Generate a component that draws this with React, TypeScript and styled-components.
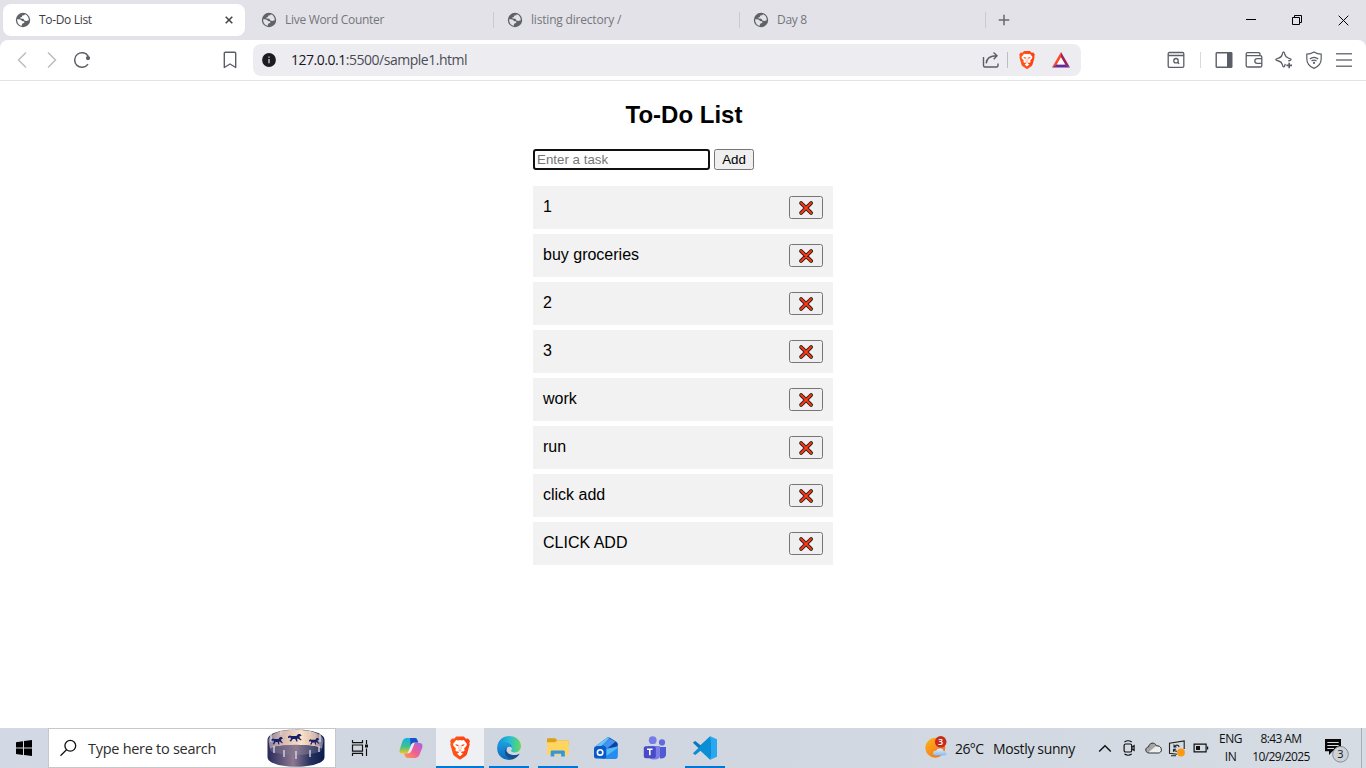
import React from "react";
import styled, { createGlobalStyle } from "styled-components";

const GlobalStyle = createGlobalStyle`
  * { box-sizing: border-box; }
  body { margin: 0; background: #fff; overflow: hidden; }
  svg { display: block; flex: none; }
`;

const ui = `"Open Sans", "Noto Sans", sans-serif`;

const Screen = styled.div`
  display: flex;
  flex-direction: column;
  width: 1366px;
  height: 768px;
  background: #fff;
`;

/* ---------- tab strip ---------- */
const TabStrip = styled.div`
  display: flex;
  height: 40px;
  padding-left: 1px;
  background: #e3e2e8;
`;
const TabCell = styled.div`
  display: flex;
  align-items: center;
  width: 246px;
  height: 40px;
  padding: 0 2px;
`;
const TabPill = styled.div<{ $active?: boolean }>`
  display: flex;
  align-items: center;
  width: 242px;
  height: 32px;
  padding: 0 12px;
  border-radius: 8px;
  background: ${(p) => (p.$active ? "#fff" : "transparent")};
`;
const TabTitle = styled.span<{ $active?: boolean; $spacing: number }>`
  flex: 1;
  margin-left: 8px;
  font: 12px/16px ${ui};
  letter-spacing: ${(p) => p.$spacing}px;
  white-space: nowrap;
  color: ${(p) => (p.$active ? "#3b3e44" : "#74767b")};
`;
const TabDivider = styled.div`
  width: 1px;
  height: 16px;
  margin: 12px -1px 0 0;
  background: #cacad0;
`;
const NewTab = styled.div`
  display: flex;
  align-items: center;
  justify-content: center;
  width: 38px;
`;
const WindowControls = styled.div`
  display: flex;
  margin-left: auto;
`;
const WindowButton = styled.div`
  display: flex;
  align-items: center;
  justify-content: center;
  width: 46px;
  height: 40px;
`;

/* ---------- toolbar ---------- */
const ToolbarBack = styled.div`
  height: 41px;
  background: #e3e2e8;
`;
const Toolbar = styled.div`
  display: flex;
  align-items: center;
  height: 41px;
  padding: 0 7px;
  border-bottom: 1px solid #e3e2e8;
  border-radius: 8px 8px 0 0;
  background: #fff;
`;
const ToolSlot = styled.div<{ $w?: number; $before?: number }>`
  display: flex;
  flex: none;
  align-items: center;
  justify-content: center;
  width: ${(p) => p.$w ?? 30}px;
  height: 32px;
  margin-left: ${(p) => p.$before ?? 0}px;
`;
const AddressBar = styled.div`
  display: flex;
  align-items: center;
  width: 828px;
  height: 32px;
  margin: 0 80px 0 8px;
  padding: 0 5px 0 1px;
  border-radius: 8px;
  background: #edecf1;
`;
const Address = styled.div`
  flex: 1;
  margin-left: 7px;
  font: 14px/20px ${ui};
  letter-spacing: -0.48px;
  color: #4a4c55;
  b { font-weight: 400; color: #17171f; }
`;
const Rule = styled.div<{ $color: string }>`
  width: 1px;
  height: 16px;
  background: ${(p) => p.$color};
`;

/* ---------- page ---------- */
const Page = styled.main`
  flex: 1;
  min-height: 0;
  font-family: "Liberation Sans", Arial, sans-serif;
`;
const Todo = styled.div`
  width: 300px;
  margin: 0 auto;
  padding-top: 20px;
`;
const Heading = styled.h2`
  margin: 0 0 20px;
  padding-left: 2px;
  font-size: 24px;
  line-height: 28px;
  text-align: center;
  color: #000;
`;
const Entry = styled.div`
  display: flex;
  gap: 4px;
  height: 21px;
`;
const TaskInput = styled.input`
  width: 177px;
  height: 21px;
  padding: 0 2px;
  border: 2px solid #101010;
  border-radius: 3px;
  outline: none;
  background: #fff;
  font: 13.333px "Liberation Sans", Arial, sans-serif;
  &::placeholder { color: #757575; }
`;
const Button = styled.button<{ $w: number; $h: number }>`
  display: flex;
  align-items: center;
  justify-content: center;
  width: ${(p) => p.$w}px;
  height: ${(p) => p.$h}px;
  padding: 0;
  border: 1px solid #767676;
  border-radius: 2.5px;
  background: #efefef;
  color: #000;
  font: 13.333px "Liberation Sans", Arial, sans-serif;
`;
const List = styled.ul`
  display: flex;
  flex-direction: column;
  gap: 5px;
  margin: 16px 0 0;
  padding: 0;
  list-style: none;
`;
const Item = styled.li`
  display: flex;
  justify-content: space-between;
  height: 43px;
  padding: 10px;
  background: #f2f2f2;
  font-size: 16px;
  line-height: 21px;
  color: #000;
`;

/* ---------- taskbar ---------- */
const Taskbar = styled.footer`
  display: flex;
  height: 40px;
  background: linear-gradient(90deg, #d3d9e4 0%, #d0d6df 35%, #d1d8e1 65%, #d5dce4 100%);
  font-family: ${ui};
`;
const StartButton = styled.div`
  display: flex;
  align-items: center;
  justify-content: center;
  width: 48px;
`;
const SearchBox = styled.div`
  display: flex;
  align-items: center;
  width: 288px;
  padding: 0 10px 0 11px;
  border: 1px solid #c5c7c9;
  background: #fff;
`;
const SearchLabel = styled.span`
  flex: 1;
  margin-left: 10px;
  font-size: 14.5px;
  letter-spacing: -0.28px;
  white-space: nowrap;
  color: #2d2d2d;
`;
const AppSlot = styled.div<{ $active?: boolean; $running?: boolean; $w?: number; $before?: number }>`
  display: flex;
  align-items: center;
  justify-content: center;
  width: ${(p) => p.$w ?? 49}px;
  height: 40px;
  margin-left: ${(p) => p.$before ?? 0}px;
  background:
    linear-gradient(#0078d7, #0078d7) 50% 100% / ${(p) => (p.$active ? "100%" : p.$running ? "40px" : "0")} 2px no-repeat
    ${(p) => (p.$active ? ", #eff0f4" : "")};
`;
const Weather = styled.div`
  display: flex;
  align-items: center;
  width: 169px;
  margin-left: auto;
  font-size: 14px;
  white-space: nowrap;
  color: #111;
`;
const Temp = styled.span`
  margin-left: 7px;
  width: 38px;
  letter-spacing: -0.6px;
`;
const Condition = styled.span`
  letter-spacing: -0.36px;
`;
const TrayIcon = styled.div`
  display: flex;
  align-items: center;
  justify-content: center;
  width: 24px;
`;
const Stack = styled.div<{ $w: number; $spacing: number }>`
  display: flex;
  flex-direction: column;
  justify-content: center;
  width: ${(p) => p.$w}px;
  font-size: 12px;
  line-height: 18px;
  letter-spacing: ${(p) => p.$spacing}px;
  text-align: center;
  white-space: nowrap;
  color: #111;
`;
const Notifications = styled.div`
  display: flex;
  align-items: center;
  justify-content: center;
  width: 46px;
  padding-top: 6px;
`;
const ShowDesktop = styled.div`
  width: 5px;
  margin-left: 1px;
  border-left: 1px solid #aab0b6;
`;

/* ---------- icons ---------- */
const Globe = ({ land }: { land: string }) => (
  <svg width="16" height="16" viewBox="0 0 16 16">
    <circle cx="8" cy="8" r="7.2" fill="#5f6368" />
    <path d="M2.2 7.2C4.2 7.1 5.6 7.3 6.4 8.2 6.9 8.9 7.4 9.2 8.7 9.3 10 9.6 9.5 11.2 8.2 11.3 7.1 11.5 7 12.2 6.8 13.8 3.6 13.2 1.9 10.2 2.2 7.2ZM9.9 2.3 9.2 3.2 7.3 3.5 6.9 4.9 5.2 5.5 5.6 6.4 8.4 6.7 9.4 8.5 11.2 8.9 13.8 8.3C13.9 5.4 12.2 3 9.9 2.3Z" fill={land} />
  </svg>
);
const Cross = ({ size, color, weight = 1 }: { size: number; color: string; weight?: number }) => (
  <svg width={size} height={size} viewBox={`0 0 ${size} ${size}`} stroke={color} strokeWidth={weight}>
    <path d={`M.7.7 ${size - 0.7} ${size - 0.7}M${size - 0.7}.7.7 ${size - 0.7}`} />
  </svg>
);
const Chevron = ({ flip }: { flip?: boolean }) => (
  <svg width="16" height="18" viewBox="0 0 16 18" fill="none" stroke="#bdbec2" strokeWidth="1.5">
    <path d={flip ? "M4 1.5 11.5 9 4 16.5" : "M12 1.5 4.5 9 12 16.5"} />
  </svg>
);
const Reload = () => (
  <svg width="20" height="20" viewBox="0 0 20 20">
    <path d="M16.3 6.4A7.3 7.3 0 1 0 16 14.1" fill="none" stroke="#5b5e66" strokeWidth="1.5" />
    <circle cx="16" cy="8.1" r="2.1" fill="#5b5e66" />
  </svg>
);
const Bookmark = () => (
  <svg width="14" height="18" viewBox="0 0 14 18" fill="none" stroke="#5b5e66" strokeWidth="1.4" strokeLinejoin="round">
    <path d="M1.3 2.2Q1.3 1.2 2.3 1.2H11.7Q12.7 1.2 12.7 2.2V16.5L7 13 1.3 16.5Z" />
  </svg>
);
const Info = () => (
  <svg width="14" height="14" viewBox="0 0 14 14">
    <circle cx="7" cy="7" r="6.9" fill="#1b1b22" />
    <path d="M7 6V10.3M7 3.5V4.8" stroke="#d8d8de" strokeWidth="1.3" />
  </svg>
);
const Share = () => (
  <svg width="18" height="18" viewBox="0 0 18 18" fill="none" stroke="#5b5e66" strokeWidth="1.4">
    <path d="M1.5 6V14.5Q1.5 16 3 16H14.5Q16 16 16 14.5V12.5M4.2 12.4C4.5 7.5 7.5 4.8 14.8 4.8M11.5 1.5 15 4.8 11.7 8.2" />
  </svg>
);
const Brave = ({ width, height }: { width: number; height: number }) => (
  <svg width={width} height={height} viewBox="0 0 20 23">
    <defs>
      <linearGradient id="brave"><stop stopColor="#ff5a18" /><stop offset="1" stopColor="#ff3c12" /></linearGradient>
    </defs>
    <path d="M6.2 0H13.8L15.9 2.3 18 2 20 4.5 19.3 6.6 19.7 8 17.1 17.2Q16.7 18.6 15.5 19.5L10.8 22.8Q10 23.3 9.2 22.8L4.5 19.5Q3.3 18.6 2.9 17.2L.3 8 .7 6.6 0 4.5 2 2 4.1 2.3Z" fill="url(#brave)" />
    <path d="M6.2 3.6 8.3 4 10 3.5 11.7 4 13.8 3.6 17 7.6 16.4 9.5 14.1 12 14.7 13.8 13 15.2 12.2 14.7 10.8 15.8 13 17.3 10 19.7 7 17.3 9.2 15.8 7.8 14.7 7 15.2 5.3 13.8 5.9 12 3.6 9.5 3 7.6Z" fill="#fff" />
    <path d="M5.3 7.6 8.6 8.4 8.2 9.8 6.4 9.2ZM14.7 7.6 11.4 8.4 11.8 9.8 13.6 9.2ZM8 13.2 10 14.2 12 13.2 10 15Z" fill="#ff4a15" />
    <path d="M9 8.4 8.7 12.3 10 13 11.3 12.3 11 8.4" fill="none" stroke="#ff8964" strokeWidth=".6" />
  </svg>
);
const Rewards = () => (
  <svg width="18" height="16" viewBox="0 0 18 16">
    <path d="M9 0 0 15.5 5.2 12.4 9 6Z" fill="#ff4724" />
    <path d="M9 0 18 15.5 12.8 12.4 9 6Z" fill="#9e1f63" />
    <path d="M0 15.5H18L12.8 12.2H5.2Z" fill="#662d91" />
    <path d="M9 5.2 13.2 12.5H4.8Z" fill="#fff" />
  </svg>
);
const PageSearch = () => (
  <svg width="18" height="18" viewBox="0 0 18 18" fill="none" stroke="#5b5e66" strokeWidth="1.3">
    <rect x="1.2" y="1.5" width="15.6" height="14.8" rx="1.2" />
    <path d="M1.2 4.5H16.8M10.6 11.2 12.2 12.8" />
    <circle cx="9" cy="9.7" r="2.2" />
  </svg>
);
const SidePanel = () => (
  <svg width="18" height="18" viewBox="0 0 18 18" fill="none" stroke="#5b5e66" strokeWidth="1.4">
    <rect x="1.2" y="1.7" width="15.6" height="14.6" rx=".6" />
    <path d="M12 2H17V16H12Z" fill="#5b5e66" stroke="none" />
  </svg>
);
const Wallet = () => (
  <svg width="18" height="18" viewBox="0 0 18 18" fill="none" stroke="#5b5e66" strokeWidth="1.3">
    <path d="M15 4.6V3.2Q15 1.7 13.5 1.7H2.8Q1.2 1.7 1.2 3.2V14.4Q1.2 16 2.8 16H15.2Q16.8 16 16.8 14.4V6.2Q16.8 4.6 15.2 4.6H1.5" />
    <path d="M16.8 7.6H12.2Q9.8 7.6 9.8 10T12.2 12.4H16.8" />
  </svg>
);
const Sparkle = () => (
  <svg width="18" height="18" viewBox="0 0 18 18" fill="none" stroke="#5b5e66" strokeWidth="1.3" strokeLinejoin="round">
    <path d="M10.3 12.8C9.5 16.6 8 17 7.2 13.2 6.6 11.3 5.7 10.5 3.6 10-.2 9.2-.2 7.9 3.6 7.1 5.7 6.7 6.6 5.6 7.2 3.5 8 0 9 0 9.9 3.5 10.4 5.6 11.5 6.5 13.5 7.1 17.1 8 17.1 9.1 13.3 10" />
    <path d="M14.2 11.7V17.2M11.4 14.4H17" strokeWidth="1.6" />
  </svg>
);
const Vpn = () => (
  <svg width="18" height="18" viewBox="0 0 18 18" fill="none" stroke="#5b5e66" strokeWidth="1.2">
    <path d="M9 .9Q12.5 3.1 16.2 3.1V7.5C16.2 13 13.3 15.7 9 17.4 4.7 15.7 1.8 13 1.8 7.5V3.1Q5.5 3.1 9 .9Z" />
    <path d="M4.8 8Q9 4.6 13.2 8M6.5 10.1Q9 8 11.5 10.1" strokeWidth="1.3" />
    <circle cx="9" cy="11.9" r="1.1" fill="#5b5e66" stroke="none" />
  </svg>
);
const Menu = () => (
  <svg width="16" height="16" viewBox="0 0 16 16" stroke="#74777d" strokeWidth="1.5">
    <path d="M0 1.8H16M0 8H16M0 14.2H16" />
  </svg>
);
const DeleteMark = () => (
  <svg width="16" height="17" viewBox="0 0 16 17" strokeLinecap="round">
    <path d="M3.1 4.1 13.1 13.9M13.1 4.1 3.1 13.9" stroke="#2c1714" strokeWidth="3.8" />
    <path d="M3.1 4.1 13.1 13.9M13.1 4.1 3.1 13.9" stroke="#f03a17" strokeWidth="2.1" />
  </svg>
);
const WindowsLogo = () => (
  <svg width="16" height="16" viewBox="0 0 16 16">
    <path d="M0 2.2 7 1.2V7.5H0ZM8 1.1 16 0V7.5H8ZM0 8.5H7V14.9L0 13.9ZM8 8.5H16V16L8 14.9Z" />
  </svg>
);
const Magnifier = () => (
  <svg width="18" height="18" viewBox="0 0 18 18" fill="none" stroke="#111" strokeWidth="1.3">
    <circle cx="10.3" cy="6.8" r="5.4" />
    <path d="M6.5 10.7.5 16.7" />
  </svg>
);
const horse = "M0 2.5 1.5 1.5 3 2H7L8.5 0 10 0 11.5 1.5 9.5 2.5 9.8 4 11.5 6 10.5 6.3 8.5 4.8 7.5 4.8 8 7.5 7 7.5 6 4.9 4 5 2.5 7.5 1.2 7 2.5 5 2 3.5 0 4Z";
const Carousel = () => (
  <svg width="58" height="38" viewBox="0 0 58 38">
    <defs>
      <linearGradient id="drum"><stop stopColor="#28285b" /><stop offset=".45" stopColor="#8d7991" /><stop offset=".75" stopColor="#28315f" /><stop offset="1" stopColor="#091c4b" /></linearGradient>
      <linearGradient id="inner"><stop stopColor="#8e849b" /><stop offset=".25" stopColor="#d7b9ae" /><stop offset=".6" stopColor="#fae1c8" /><stop offset=".85" stopColor="#d9b9a8" /><stop offset="1" stopColor="#60688d" /></linearGradient>
      <linearGradient id="floor"><stop stopColor="#565476" /><stop offset=".5" stopColor="#8c7b91" /><stop offset="1" stopColor="#2a3765" /></linearGradient>
    </defs>
    <path d="M.5 11C.5-3 57.5-3 57.5 11V28C57.5 41 .5 41 .5 28Z" fill="url(#drum)" />
    <path d="M1.5 12C1-3 57-3 56.5 12L55 20C49 14.5 9 14.5 3 20Z" fill="url(#inner)" />
    <ellipse cx="29" cy="20.8" rx="26" ry="5" fill="url(#floor)" />
    <path d="M4 5V13M14 1V6M27 0V5M43 1V6M53 5V13M7 17V24M17 21V28M29 22V30M43 21V28M52 17V23" stroke="#d5d5e5" strokeWidth="1.4" />
    <g fill="#17206c">
      <path transform="translate(4.5 8)" d={horse} />
      <path transform="translate(21 5) scale(1.2 1)" d={horse} />
      <path transform="translate(42 9) scale(.9)" d={horse} />
    </g>
  </svg>
);
const TaskView = () => (
  <svg width="18" height="16" viewBox="0 0 18 16" fill="none" stroke="#111" strokeWidth="1.2">
    <path d="M1.5 0V2.7H11.5V0M1.5 16V13.3H11.5V16M1.5 5H11.5V11.2H1.5ZM15.5 0V4M15.5 8.5V16" />
    <rect x="14" y="4.5" width="3" height="3" fill="#111" stroke="none" />
  </svg>
);
const Copilot = () => (
  <svg width="24" height="22" viewBox="0 0 26 24">
    <defs>
      <linearGradient id="cpA" x2="0" y2="1"><stop stopColor="#17aee9" /><stop offset=".55" stopColor="#3fc18b" /><stop offset="1" stopColor="#f3c622" /></linearGradient>
      <linearGradient id="cpB" x1="1" x2="0" y2="1"><stop stopColor="#a762e7" /><stop offset=".5" stopColor="#ee5f95" /><stop offset="1" stopColor="#ff9b45" /></linearGradient>
    </defs>
    <path d="M8 1H17.5Q19.2 1 20 3.5L21 6H17.5Q14.5 6 13.2 9.5L10.5 16.5Q10 18 7.5 18H3.5Q-.6 18 .8 13L3.9 4Q5 1 8 1Z" fill="url(#cpA)" />
    <path d="M12 1H17.5Q19.2 1 20 3.5L21 6H17.5Q14.5 6 13.4 8.5L12.5 10Z" fill="#1752ca" />
    <path d="M18 23H9Q6.8 23 6 20L5.5 18H8.3Q11.3 18 12.6 14.5L15 8Q15.8 6.5 17 6.5H22.3Q26.5 6.5 25.2 12L22 20Q20.8 23 18 23Z" fill="url(#cpB)" />
    <path d="M12.7 9.5Q14.2 6 17.2 6L13.6 15Q12.3 18 9.2 18Z" fill="#e9eaf5" />
  </svg>
);
const Edge = () => (
  <svg width="24" height="24" viewBox="0 0 24 24">
    <defs>
      <linearGradient id="edA"><stop stopColor="#168bda" /><stop offset=".55" stopColor="#2bbfd0" /><stop offset="1" stopColor="#65db55" /></linearGradient>
      <linearGradient id="edB" x2="0" y2="1"><stop stopColor="#1b9de2" /><stop offset="1" stopColor="#1167b7" /></linearGradient>
    </defs>
    <path d="M.2 11C.8 4.6 5.9 0 12.2 0 19 0 24 4.6 24 10.3 24 14 21.2 16.5 17.7 16.5 15.2 16.5 13.6 15.6 14.2 14.6 16.1 11.7 14 7.5 9.3 7.5 5.4 7.5 2 9 .2 11Z" fill="url(#edA)" />
    <path d="M.2 11C2.2 7 6 5.9 9.5 6.4 13 6.8 15.2 9.2 15 11.7 11.5 8.9 8.2 12.3 9 16.2 9.6 19.8 12.5 23 16.2 23.2 7.5 26-.7 20 .2 11Z" fill="url(#edB)" />
    <path d="M9.5 11.4C5.8 15.7 8.8 23 16 23.2 18.9 22 21.4 20.2 22.6 17.8 18.2 20.1 11.5 19.3 9.5 14.9Z" fill="#12508f" />
  </svg>
);
const Folder = () => (
  <svg width="22" height="20" viewBox="0 0 22 20">
    <path d="M0 1.2Q0 .2 1 .2H8.3L10.3 2.4H20.8Q21.8 2.4 21.8 3.4V7H0Z" fill="#daa016" />
    <path d="M0 4.2H7.8L10 2.5H20.8Q21.8 2.5 21.8 3.5V17H0Z" fill="#ffd45f" />
    <path d="M3.7 18.6V13.8Q3.7 12.5 5 12.5H16.5Q17.8 12.5 17.8 13.8V18.6H14.2V15.7H7.3V18.6Z" fill="#3595dc" />
  </svg>
);
const Outlook = () => (
  <svg width="24" height="24" viewBox="0 0 24 24">
    <path d="M2 10 12.5 2Q14.2.7 16 1.8L22 5.5Q23.7 6.7 23.7 8.5V18L6 19Z" fill="#1656be" />
    <path d="M1.5 10.5 12.5 2Q14 1 15.7 1.7L8 9.7Z" fill="#66c7f7" />
    <path d="m8.5 8.5 7-6 6 3.2-8.3 7.1Z" fill="#4293ef" />
    <path d="m13.2 12.8 8.3-7.1Q23.7 6.8 23.7 9L16 14Z" fill="#143f9f" />
    <path d="M6 14 23.7 10.5V20Q23.7 23 21 23H8Q5 23 5 20Z" fill="#4fbaf4" />
    <path d="M8 23 23.7 12V20Q23.7 23 21 23Z" fill="#278bf0" />
    <rect y="10.3" width="12.3" height="12.3" rx="2.3" fill="#0c59c8" />
    <circle cx="6.1" cy="16.4" r="2.7" fill="none" stroke="#fff" strokeWidth="1.6" />
  </svg>
);
const Teams = () => (
  <svg width="24" height="24" viewBox="0 0 24 24">
    <circle cx="9.7" cy="4.2" r="3.9" fill="#777be8" />
    <circle cx="19" cy="6.4" r="3.1" fill="#6069df" />
    <path d="M14 11H23V19Q22 23 17 22.5Z" fill="#4f5bd5" />
    <path d="M5 10H17V19Q17 23.5 11 23.5T5 18Z" fill="#7c7de9" />
    <rect x=".8" y="10.2" width="12" height="12" rx="2" fill="#484bc5" />
    <path d="M4 13.3H9.6M6.8 13.3V19.2" stroke="#fff" strokeWidth="1.6" />
  </svg>
);
const Code = () => (
  <svg width="24" height="24" viewBox="0 0 24 24">
    <path d="M17.2.2 7.5 9.2 2.3 5.1.2 6.2V7L17.5 23.7 18.3 18Z" fill="#0b78bd" />
    <path d="M17.2 23.8 7.5 14.8 2.3 18.9.2 17.8V17L17.5.3 18.3 6Z" fill="#0a8ed5" />
    <path d="M17.2.2 24 3.2V20.8L17.2 23.8 18 18V6Z" fill="#2aa7f1" />
  </svg>
);
const Sun = () => (
  <svg width="24" height="24" viewBox="0 0 24 24">
    <defs>
      <linearGradient id="sunny" x2="1" y2="1"><stop stopColor="#ffb51c" /><stop offset="1" stopColor="#f16a16" /></linearGradient>
      <linearGradient id="cloudy" x2="0" y2="1"><stop stopColor="#e3efff" /><stop offset="1" stopColor="#86baf5" /></linearGradient>
    </defs>
    <circle cx="11.3" cy="11.7" r="10" fill="url(#sunny)" />
    <path d="M12 19.5Q9 19.5 9 17T12 14.8Q13.5 12 17 12.6 19.4 13.1 19.8 15.3 22.7 15.3 22.7 17.5T20 19.5Z" fill="url(#cloudy)" />
    <circle cx="16.7" cy="5.8" r="5.8" fill="#c42b1c" />
    <text x="16.7" y="9" textAnchor="middle" fontFamily="Open Sans" fontSize="9" fontWeight="600" fill="#fff">3</text>
  </svg>
);
const TrayChevron = () => (
  <svg width="14" height="9" viewBox="0 0 14 9" fill="none" stroke="#111" strokeWidth="1.4"><path d="m1.2 7.5 5.8-5.8 5.8 5.8" /></svg>
);
const Meet = () => (
  <svg width="12" height="16" viewBox="0 0 12 16" fill="none" stroke="#111" strokeWidth="1.2">
    <rect x="1.1" y="4" width="7.6" height="8" rx="1.6" />
    <path d="m8.8 7.2 2.3-1.5v4.6L8.8 8.8M1.5 1.9Q5-.4 8.7 1.9M1.5 14.1Q5 16.4 8.7 14.1" />
  </svg>
);
const Cloud = () => (
  <svg width="17" height="12" viewBox="0 0 17 12">
    <path d="M4 11C-.3 10.8-.2 5.3 3.5 5 4 .8 9.6-.6 11.4 3.8 17.6 3.3 17.7 10.8 13.5 11Z" fill="#a6a6a6" />
    <path d="M3 10.8 10.4 4.5C17.6 2.6 17.7 10.8 13.5 11H4Z" fill="#eee" />
    <path d="M4 11C-.3 10.8-.2 5.3 3.5 5 4 .8 9.6-.6 11.4 3.8 17.6 3.3 17.7 10.8 13.5 11Z" fill="none" stroke="#333" />
  </svg>
);
const Sync = () => (
  <svg width="18" height="17" viewBox="0 0 18 17" fill="none" stroke="#222" strokeWidth="1.1">
    <path d="M9 14.3 1.5 13.3V3.3L16.2 1V9M3 15.7H8M11.2 7Q10.5 4.7 8.2 5.2L6.2 6.8M6 4.5V7H8.5M5.5 9.2H8M5.5 11.7V9.2Q7 12 9 11" />
    <circle cx="13" cy="12.5" r="3.9" fill="#ff970f" stroke="none" />
  </svg>
);
const Battery = () => (
  <svg width="16" height="10" viewBox="0 0 16 10">
    <path d="M1.1 1.1H13.1V8.9H1.1ZM14.6 3.4V6.6" fill="none" stroke="#111" strokeWidth="1.2" />
    <path d="M3 3H7V7H3Z" fill="#111" />
  </svg>
);
const Notes = () => (
  <svg width="26" height="26" viewBox="0 0 26 26">
    <path d="M1 1H17V13.3H8.5L5 17V13.3H1Z" fill="#080808" />
    <path d="M3.3 4.5H14.7M3.3 7.5H14.7M3.3 10.5H10" stroke="#d5dce4" strokeWidth="1" />
    <circle cx="16.5" cy="16.3" r="7.8" fill="#ccd2d8" stroke="#858b91" />
    <text x="16.5" y="20.3" textAnchor="middle" fontFamily="Open Sans" fontSize="11" fill="#111">3</text>
  </svg>
);

const tabs = [
  { title: "To-Do List", spacing: -0.33, active: true },
  { title: "Live Word Counter", spacing: -0.3 },
  { title: "listing directory /", spacing: -0.19 },
  { title: "Day 8", spacing: -0.3 },
];
const tasks = ["1", "buy groceries", "2", "3", "work", "run", "click add", "CLICK ADD"];

export default function App() {
  return (
    <Screen>
      <GlobalStyle />
      <TabStrip>
        {tabs.map((t, i) => (
          <React.Fragment key={t.title}>
            <TabCell>
              <TabPill $active={t.active}>
                <Globe land={t.active ? "#fff" : "#e3e2e8"} />
                <TabTitle $active={t.active} $spacing={t.spacing}>{t.title}</TabTitle>
                {t.active && <Cross size={8} color="#45474c" weight={1.6} />}
              </TabPill>
            </TabCell>
            {i > 0 && <TabDivider />}
          </React.Fragment>
        ))}
        <NewTab>
          <svg width="12" height="12" viewBox="0 0 12 12" stroke="#68696f" strokeWidth="1.5"><path d="M6 .7V11.3M.7 6H11.3" /></svg>
        </NewTab>
        <WindowControls>
          <WindowButton>
            <svg width="10" height="10" viewBox="0 0 10 10"><path d="M0 4.5H10" stroke="#000" /></svg>
          </WindowButton>
          <WindowButton>
            <svg width="10" height="10" viewBox="0 0 10 10" fill="none" stroke="#000"><path d="M.5 2.5H7.5V9.5H.5ZM2.5 2.5V.5H9.5V7.5H7.5" /></svg>
          </WindowButton>
          <WindowButton><Cross size={11} color="#000" /></WindowButton>
        </WindowControls>
      </TabStrip>

      <ToolbarBack>
        <Toolbar>
          <ToolSlot><Chevron /></ToolSlot>
          <ToolSlot><Chevron flip /></ToolSlot>
          <ToolSlot><Reload /></ToolSlot>
          <ToolSlot $before={118}><Bookmark /></ToolSlot>
          <AddressBar>
            <ToolSlot><Info /></ToolSlot>
            <Address><b>127.0.0.1</b>:5500/sample1.html</Address>
            <ToolSlot $w={32}><Share /></ToolSlot>
            <Rule $color="#bcbdc3" />
            <ToolSlot $w={38}><Brave width={16} height={18} /></ToolSlot>
            <ToolSlot><Rewards /></ToolSlot>
          </AddressBar>
          <ToolSlot><PageSearch /></ToolSlot>
          <ToolSlot $w={18}><Rule $color="#d8d8de" /></ToolSlot>
          <ToolSlot><SidePanel /></ToolSlot>
          <ToolSlot><Wallet /></ToolSlot>
          <ToolSlot><Sparkle /></ToolSlot>
          <ToolSlot><Vpn /></ToolSlot>
          <ToolSlot><Menu /></ToolSlot>
        </Toolbar>
      </ToolbarBack>

      <Page>
        <Todo>
          <Heading>To-Do List</Heading>
          <Entry>
            <TaskInput placeholder="Enter a task" />
            <Button $w={40} $h={21}>Add</Button>
          </Entry>
          <List>
            {tasks.map((t) => (
              <Item key={t}>
                {t}
                <Button $w={34} $h={23} aria-label="Delete"><DeleteMark /></Button>
              </Item>
            ))}
          </List>
        </Todo>
      </Page>

      <Taskbar>
        <StartButton><WindowsLogo /></StartButton>
        <SearchBox>
          <Magnifier />
          <SearchLabel>Type here to search</SearchLabel>
          <Carousel />
        </SearchBox>
        <AppSlot $w={48}><TaskView /></AppSlot>
        <AppSlot $w={50} $before={2}><Copilot /></AppSlot>
        <AppSlot $w={48} $active><Brave width={20} height={24} /></AppSlot>
        <AppSlot $running><Edge /></AppSlot>
        <AppSlot $running><Folder /></AppSlot>
        <AppSlot $w={48}><Outlook /></AppSlot>
        <AppSlot><Teams /></AppSlot>
        <AppSlot $running $w={50} $before={1}><Code /></AppSlot>
        <Weather>
          <Sun />
          <Temp>26°C</Temp>
          <Condition>Mostly sunny</Condition>
        </Weather>
        <TrayIcon><TrayChevron /></TrayIcon>
        <TrayIcon><Meet /></TrayIcon>
        <TrayIcon><Cloud /></TrayIcon>
        <TrayIcon><Sync /></TrayIcon>
        <TrayIcon><Battery /></TrayIcon>
        <Stack $w={35} $spacing={-0.4}><span>ENG</span><span>IN</span></Stack>
        <Stack $w={66} $spacing={-0.6}><span>8:43 AM</span><span>10/29/2025</span></Stack>
        <Notifications><Notes /></Notifications>
        <ShowDesktop />
      </Taskbar>
    </Screen>
  );
}
